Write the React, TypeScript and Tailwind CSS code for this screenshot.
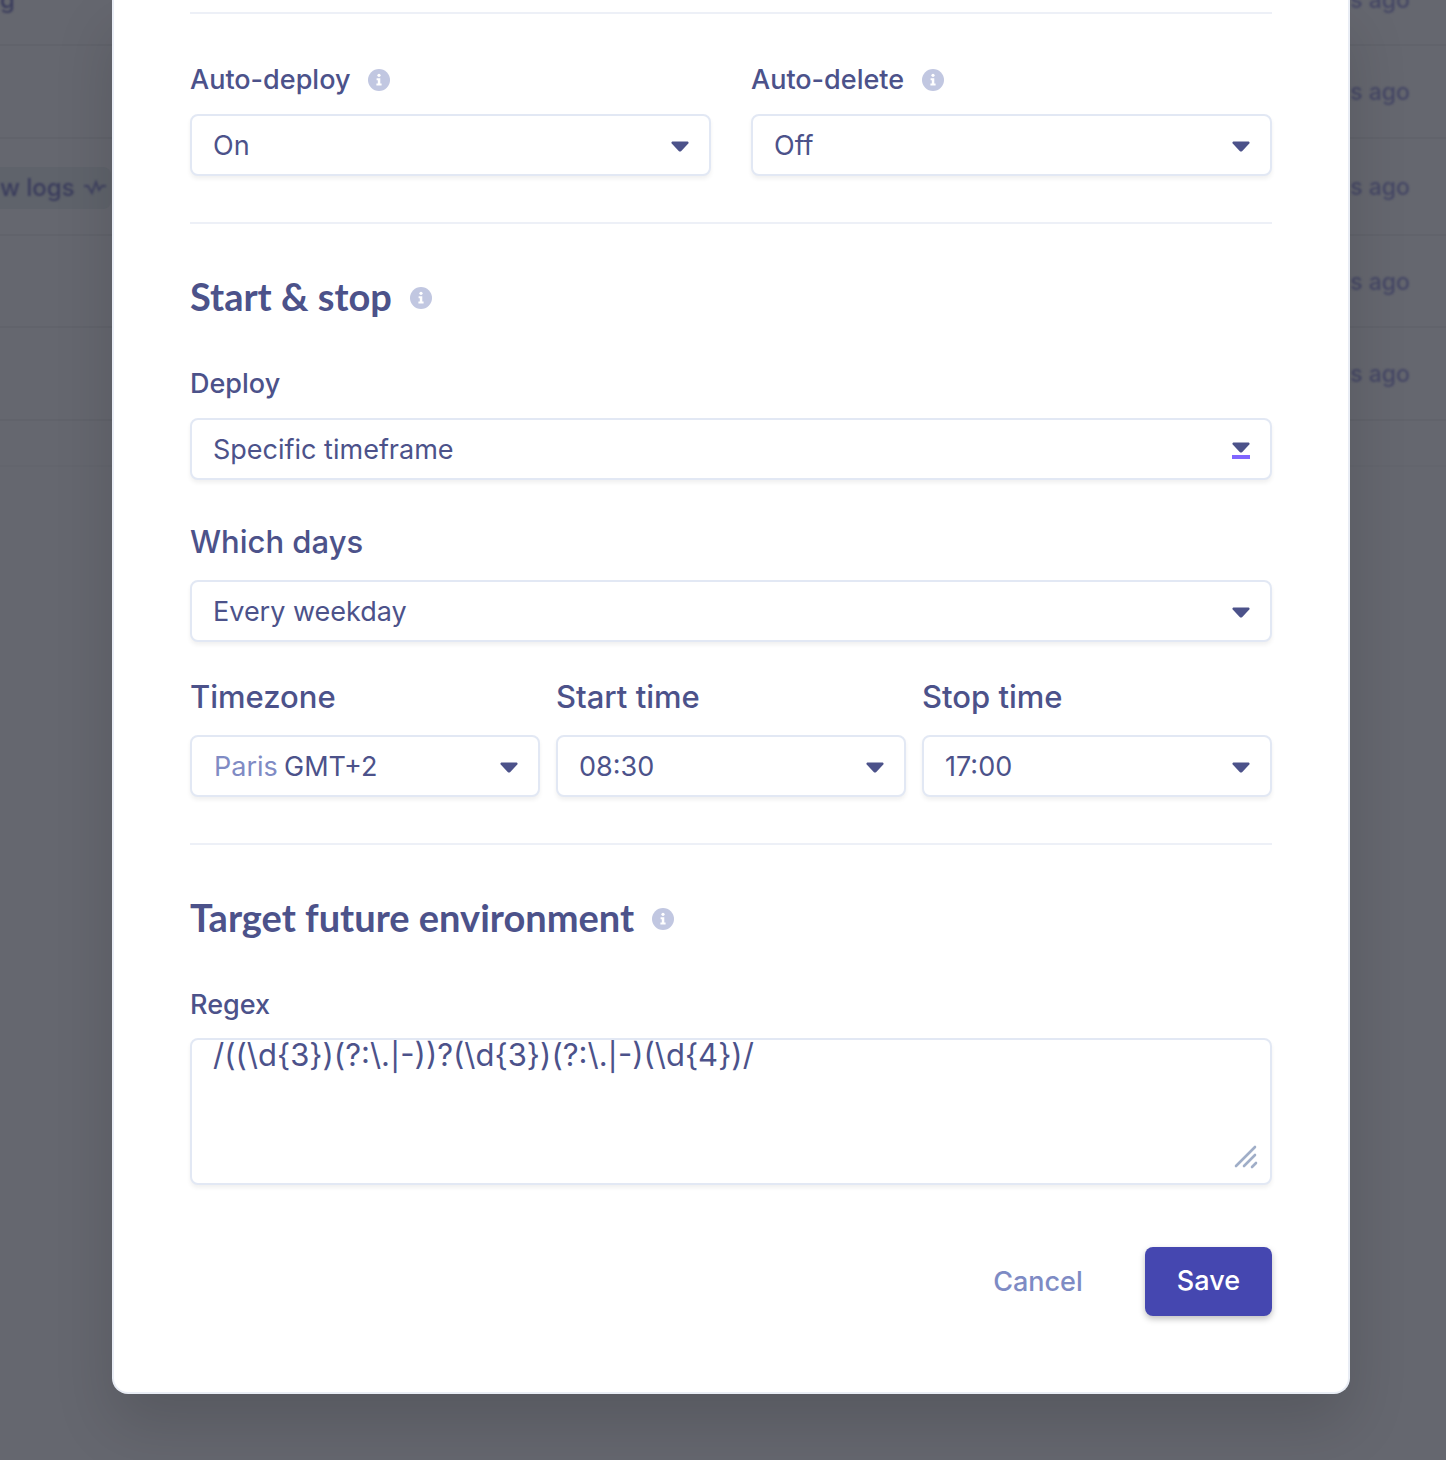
import React from "react";

function InfoButton({ label }: { label: string }) {
  return (
    <button type="button" aria-label={label} className="size-[22px] shrink-0">
      <svg viewBox="0 0 22 22" className="size-full" aria-hidden="true">
        <circle cx="11" cy="11" r="11" fill="#c1c7e1" />
        <circle cx="11" cy="6.3" r="1.6" fill="#fff" />
        <path d="M8.6 9.2h3.7v5.4h1.3v2H8.4v-2h1.4v-3.4H8.6z" fill="#fff" />
      </svg>
    </button>
  );
}

type SelectFieldProps = {
  id: string;
  label: string;
  options: string[];
  big?: boolean;
  prefix?: string;
  info?: boolean;
  marked?: boolean;
};

function SelectField({ id, label, options, big, prefix, info, marked }: SelectFieldProps) {
  return (
    <div className="min-w-0 flex-1">
      <div className="flex items-center gap-[18px]">
        <label
          htmlFor={id}
          className={big ? "text-[31px] leading-10 font-medium" : "text-[27px] leading-9 font-medium"}
        >
          {label}
        </label>
        {info && <InfoButton label={"About " + label} />}
      </div>
      <div className={big ? "relative mt-[18px]" : "relative mt-4"}>
        <select
          id={id}
          className={
            "block h-[62px] w-full appearance-none rounded-lg border-2 border-[#e2e8f4] bg-white pt-0.5 pr-16 text-[27px] shadow-[0_3px_4px_rgba(0,0,0,0.06)] " +
            (prefix ? "pl-[92px]" : "pl-[21px]")
          }
        >
          {options.map((o) => (
            <option key={o}>{o}</option>
          ))}
        </select>
        {prefix && (
          <span className="pointer-events-none absolute inset-y-0 left-6 flex items-center pt-0.5 text-[27px] text-[#808bc4]">
            {prefix}
          </span>
        )}
        <span className="pointer-events-none absolute inset-y-0 right-[22px] flex flex-col items-center justify-center gap-0.5 pt-0.5">
          <svg viewBox="0 0 18 11" className="h-[11px] w-[18px]" aria-hidden="true">
            <path d="M1.3 0.5h15.4q1.4.5.6 2L10.3 10q-1.3 1.1-2.6 0L.7 2.5Q-.1 1 1.3.5z" fill="#4c528a" />
          </svg>
          {marked && <span className="h-1 w-[18px] bg-[#8066ff]" />}
        </span>
      </div>
    </div>
  );
}

function SectionTitle({ children }: { children: string }) {
  return (
    <div className="flex items-center gap-[18px]">
      <h2 className="pb-1 font-[Lato] text-[38px] leading-[44px] font-bold">{children}</h2>
      <InfoButton label={"About " + children} />
    </div>
  );
}

function Divider() {
  return <hr className="border-t-2 border-[#edf0f7]" />;
}

function DeploymentRow({ className, children }: { className: string; children?: React.ReactNode }) {
  return (
    <li className={"flex items-center justify-between border-b-2 border-[#61636b] pt-0.5 pr-9 " + className}>
      <div>{children}</div>
      <span className="text-[23px] blur-[1px]">s ago</span>
    </li>
  );
}

function Backdrop() {
  return (
    <div className="col-start-1 row-start-1 overflow-hidden bg-[#65676f] font-medium text-[#454765]">
      <ul className="-mt-[46px]">
        <DeploymentRow className="h-[92px]">
          <span className="text-[24px] text-[#3a3c5c] blur-[1px]">g</span>
        </DeploymentRow>
        <DeploymentRow className="h-[93px]" />
        <DeploymentRow className="h-[97px]">
          <span className="flex h-[42px] w-[111px] items-center gap-2 rounded-r-lg bg-[#5f636b] text-[24px] text-[#3a3c5c]">
            <span className="whitespace-nowrap blur-[1px]">w logs</span>
            <svg viewBox="0 0 24 16" className="h-4 w-6 shrink-0 blur-[1px]" fill="none" stroke="#3f4160" strokeWidth="2" aria-hidden="true">
              <path d="M1 6h4l4 7 4-11 3 8 3-4h4" />
            </svg>
          </span>
        </DeploymentRow>
        <DeploymentRow className="h-[92px]" />
        <DeploymentRow className="h-[93px]" />
        <li className="h-[46px] border-b-2 border-[#63656d]" />
      </ul>
    </div>
  );
}

export default function App() {
  return (
    <div className="grid min-h-screen grid-cols-1 overflow-hidden font-[Inter,sans-serif]">
      <Backdrop />
      <div
        role="dialog"
        aria-label="Deployment rules"
        className="relative col-start-1 row-start-1 mr-24 ml-28 self-start rounded-b-2xl border-2 border-t-0 border-[#e9edf5] bg-white px-[76px] pt-3 pb-[76px] text-[#4c528a] shadow-[0_30px_60px_rgba(0,0,0,0.14)]"
      >
        <form onSubmit={(e) => e.preventDefault()}>
          <Divider />
          <div className="mt-12 mb-[46px] flex gap-10">
            <SelectField id="auto-deploy" label="Auto-deploy" options={["On", "Off"]} info />
            <SelectField id="auto-delete" label="Auto-delete" options={["Off", "On"]} info />
          </div>
          <Divider />
          <div className="mt-[50px] mb-11">
            <SectionTitle>Start &amp; stop</SectionTitle>
          </div>
          <SelectField id="deploy" label="Deploy" options={["Specific timeframe", "Always"]} marked />
          <div className="mt-[42px] mb-[35px]">
            <SelectField id="days" label="Which days" options={["Every weekday", "Every day"]} big />
          </div>
          <div className="mb-[46px] flex gap-4">
            <SelectField id="timezone" label="Timezone" options={["GMT+2", "GMT+1"]} prefix="Paris" big />
            <SelectField id="start" label="Start time" options={["08:30", "09:00"]} big />
            <SelectField id="stop" label="Stop time" options={["17:00", "18:00"]} big />
          </div>
          <Divider />
          <div className="mt-[50px] mb-11">
            <SectionTitle>Target future environment</SectionTitle>
          </div>
          <label htmlFor="regex" className="block text-[27px] leading-9 font-medium">
            Regex
          </label>
          <div className="relative mt-[15px]">
            <textarea
              id="regex"
              defaultValue={"/((\\d{3})(?:\\.|-))?(\\d{3})(?:\\.|-)(\\d{4})/"}
              className="block h-[147px] w-full resize-none rounded-lg border-2 border-[#e2e8f4] bg-white px-[21px] text-[31px] leading-[30px] shadow-[0_3px_4px_rgba(0,0,0,0.06)]"
            />
            <svg
              viewBox="0 0 24 24"
              className="pointer-events-none absolute right-3.5 bottom-4 size-6"
              fill="none"
              stroke="#a0aec8"
              strokeWidth="2.6"
              strokeLinecap="round"
              aria-hidden="true"
            >
              <path d="M2 21 21 2M10 21 21 10M18 22l4-4" />
            </svg>
          </div>
          <div className="mt-[62px] flex items-center justify-end gap-[62px]">
            <button type="button" className="text-[27px] leading-9 font-medium text-[#7e8bc4]">
              Cancel
            </button>
            <button
              type="submit"
              className="h-[69px] rounded-lg bg-[#4547b0] px-8 text-[27px] font-medium text-white shadow-[0_3px_6px_rgba(0,0,0,0.25)]"
            >
              Save
            </button>
          </div>
        </form>
      </div>
    </div>
  );
}
